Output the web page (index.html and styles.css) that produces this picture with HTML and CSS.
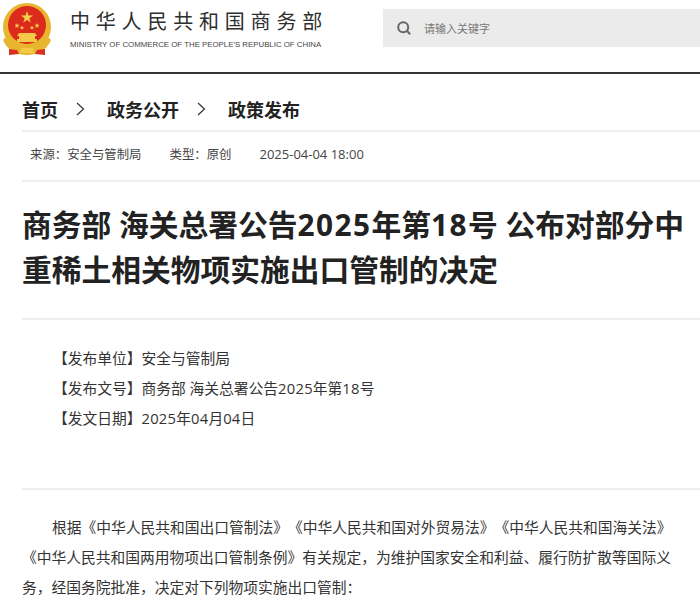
FILE: index.html
```html
<!DOCTYPE html>
<html>
  <head>
  <meta charset='UTF-8'>
  <title>商务部 海关总署公告2025年第18号</title>
    <link rel="stylesheet" href="styles.css">
  </head>
  <body>
    <header class="top">
      <div class="logo">
        <svg class="emblem" viewBox="0 0 50 56" width="50" height="56">
          <circle cx="25" cy="25" r="24" fill="#e8b62e"/>
          <circle cx="25" cy="23" r="19" fill="#dc2a1c"/>
          <path d="M25 9l1.500 4.400h4.600l-3.700 2.800 1.400 4.400-3.800-2.700-3.800 2.700 1.400-4.400-3.700-2.800h4.600z" fill="#f6d04a"/>
          <path d="M15 21l.7 1.800h1.900l-1.500 1.200.6 1.900-1.700-1.100-1.700 1.100.6-1.900-1.500-1.200h1.900zM35 21l.7 1.800h1.900l-1.500 1.200.6 1.900-1.700-1.100-1.700 1.100.6-1.900-1.500-1.200h1.900zM20 23.500l.6 1.500h1.600l-1.300 1 .5 1.600-1.400-.9-1.400.9.5-1.600-1.300-1h1.600zM30 23.500l.6 1.500h1.600l-1.300 1 .5 1.600-1.400-.9-1.400.9.5-1.600-1.300-1h1.600z" fill="#f6d04a"/>
          <path d="M17 31h16l2 3h-2v3h2v3H15v-3h2v-3h-2z" fill="#f3c945"/>
          <path d="M4 35c4 9 12 13 21 13s17-4 21-13l3 3c-4 10-13 15-24 15S5 48 1 38z" fill="#e8b62e"/>
          <path d="M7 47l8 1 2 4-10 1zM43 47l-8 1-2 4 10 1z" fill="#d9301f"/>
          <path d="M19 46h12l1 5H18z" fill="#f3c945"/>
        </svg>
        <div class="logo-text">
          <div class="logo-cn">中华人民共和国商务部</div>
          <div class="logo-en">MINISTRY OF COMMERCE OF THE PEOPLE'S REPUBLIC OF CHINA</div>
        </div>
      </div>
      <div class="search">
        <svg viewBox="0 0 16 16" width="16" height="16">
          <circle cx="7.200" cy="7.200" r="5" fill="none" stroke="#666" stroke-width="2"/>
          <path d="M10.800 10.800l3.400 3.400" stroke="#666" stroke-width="2" fill="none"/>
        </svg>
        <span>请输入关键字</span>
      </div>
    </header>
    <main class="page">
      <nav class="crumbs">
        <a>首页</a>
        <svg class="sep" viewBox="0 0 9 14" width="9" height="14"><path d="M1 1l6.500 6-6.500 6" fill="none" stroke="#333" stroke-width="1.200"/></svg>
        <a>政务公开</a>
        <svg class="sep" viewBox="0 0 9 14" width="9" height="14"><path d="M1 1l6.500 6-6.500 6" fill="none" stroke="#333" stroke-width="1.200"/></svg>
        <a>政策发布</a>
      </nav>
      <div class="meta">
        <span>来源：安全与管制局</span>
        <span>类型：原创</span>
        <span class="date">2025-04-04 18:00</span>
      </div>
      <h1 class="title">商务部 海关总署公告<span class="num">2025</span>年第<span class="num">18</span>号 公布对部分中重稀土相关物项实施出口管制的决定</h1>
      <div class="info">
        <p>【发布单位】安全与管制局</p>
        <p>【发布文号】商务部 海关总署公告<span class="num">2025</span>年第<span class="num">18</span>号</p>
        <p>【发文日期】<span class="num">2025</span>年<span class="num">04</span>月<span class="num">04</span>日</p>
      </div>
      <div class="article">
        <p>根据《中华人民共和国出口管制法》《中华人民共和国对外贸易法》《中华人民共和国海关法》《中华人民共和国两用物项出口管制条例》有关规定，为维护国家安全和利益、履行防扩散等国际义务，经国务院批准，决定对下列物项实施出口管制：</p>
      </div>
    </main>
  </body>
</html>
```

FILE: styles.css
```css
html {
  background: white;
}
body {
  margin: 0;
  font-family: "Open Sans", "Noto Sans CJK SC", sans-serif;
  color: #333;
  overflow: hidden;
  text-spacing-trim: space-all;
}
.top {
  display: flex;
  justify-content: space-between;
  align-items: flex-start;
  height: 72px;
  border-bottom: 2px solid #333;
}
.logo {
  display: flex;
  padding: 2px 0 0 2px;
}
.emblem {
  flex: none;
}
.logo-text {
  margin-left: 18px;
  padding-top: 6px;
}
.logo-cn {
  font-size: 20px;
  line-height: 28px;
  letter-spacing: 5.800px;
  color: #2f2f2f;
  white-space: nowrap;
}
.logo-en {
  font-family: "Liberation Sans", sans-serif;
  font-size: 7.850px;
  line-height: 12px;
  margin-top: 3px;
  color: #444;
  white-space: nowrap;
}
.search {
  display: flex;
  align-items: center;
  width: 317px;
  height: 38px;
  margin-top: 9px;
  padding-left: 13px;
  box-sizing: border-box;
  background: #ebebeb;
  font-size: 11px;
  color: #777;
}
.search span {
  margin-left: 12px;
}
.page {
  padding-left: 22px;
}
.crumbs {
  display: flex;
  align-items: center;
  box-sizing: border-box;
  height: 58px;
  padding-top: 14px;
  border-bottom: 2px solid #eee;
  font-size: 18px;
  font-weight: 700;
  color: #222;
}
.sep {
  margin: 0 22px 0 18px;
}
.meta {
  display: flex;
  gap: 28px;
  align-items: center;
  box-sizing: border-box;
  height: 50px;
  padding: 0 0 4px 8px;
  border-bottom: 2px solid #eee;
  font-size: 12.400px;
  color: #444;
}
.date {
  font-size: 13px;
}
.title {
  margin: 0;
  padding: 20px 0 26px;
  border-bottom: 2px solid #eee;
  font-size: 29.750px;
  line-height: 45px;
  font-weight: 700;
  color: #222;
}
.title .num {
  letter-spacing: 1.500px;
}
.info {
  padding: 23px 0 55px;
  border-bottom: 2px solid #eee;
}
.info p {
  margin: 0;
  padding-left: 31px;
  font-size: 14.750px;
  line-height: 30px;
}
.info .num {
  letter-spacing: .25px;
}
.article {
  padding-top: 22px;
}
.article p {
  margin: 0;
  padding-right: 20px;
  text-indent: 30px;
  font-size: 14.750px;
  line-height: 30px;
}
```
